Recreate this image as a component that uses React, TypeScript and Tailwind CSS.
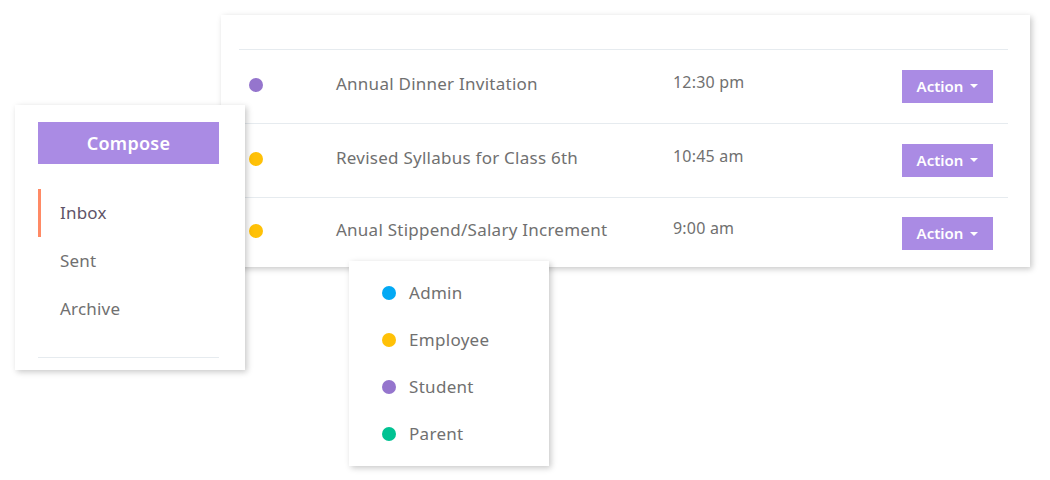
import React from "react";

const rows = [
  { dot: "bg-[#9575cd]", title: "Annual Dinner Invitation", time: "12:30 pm" },
  { dot: "bg-[#ffc107]", title: "Revised Syllabus for Class 6th", time: "10:45 am" },
  { dot: "bg-[#ffc107]", title: "Anual Stippend/Salary Increment", time: "9:00 am" },
];

const legend = [
  { dot: "bg-[#03a9f4]", label: "Admin" },
  { dot: "bg-[#ffc107]", label: "Employee" },
  { dot: "bg-[#9575cd]", label: "Student" },
  { dot: "bg-[#00c292]", label: "Parent" },
];

export default function App() {
  return (
    <div
      className="relative w-[1050px] h-[480px] bg-white overflow-hidden text-[#707070]"
      style={{ fontFamily: '"Noto Sans", "Open Sans", sans-serif' }}
    >
      {/* Main message card */}
      <div className="absolute left-[221px] top-[15px] w-[809px] h-[252px] bg-white shadow-[2px_2px_6px_rgba(0,0,0,0.22)] pl-[18px] pr-[22px]">
        <div className="h-[35px] border-b border-[#e6ebef]" />
        {rows.map((r, i) => (
          <div
            key={i}
            className={`flex items-center ${i < 2 ? "h-[74px] border-b border-[#e6ebef]" : "h-[69px]"}`}
          >
            <div className="w-[97px] pl-[10px] flex items-center">
              <span className={`block w-[14px] h-[14px] rounded-full ${r.dot} -mt-[4px]`} />
            </div>
            <div className="w-[337px] text-[17px] tracking-[0.25px] -mt-[5px]">{r.title}</div>
            <div className="w-[229px] text-[16px] tracking-[0.2px] -mt-[10px]">{r.time}</div>
            <button className={`w-[91px] h-[33px] bg-[#aa8be4] text-white text-[15px] font-semibold flex items-center justify-center gap-[7px] ${i === 2 ? "mt-[2px]" : "-mt-[1px]"}`}>
              Action
              <span className="block w-0 h-0 border-l-[4px] border-r-[4px] border-t-[4px] border-l-transparent border-r-transparent border-t-white" />
            </button>
          </div>
        ))}
      </div>

      {/* Left nav card */}
      <div className="absolute left-[15px] top-[105px] w-[230px] h-[265px] bg-white shadow-[2px_2px_6px_rgba(0,0,0,0.22)] pl-[23px] pr-[26px] pt-[17px]">
        <button className="w-full h-[42px] bg-[#aa8be4] text-white text-[18px] tracking-[0.3px] font-semibold">
          Compose
        </button>
        <div className="mt-[25px]">
          <div className="h-[48px] flex items-center border-l-[3px] border-[#ff8a65] pl-[19px] text-[17px] tracking-[0.2px] text-[#5f5468]">
            Inbox
          </div>
          <div className="h-[48px] flex items-center pl-[22px] text-[17px] tracking-[0.2px]">Sent</div>
          <div className="h-[48px] flex items-center pl-[22px] text-[17px] tracking-[0.2px]">Archive</div>
        </div>
        <div className="mt-[24px] border-b border-[#e6ebef]" />
      </div>

      {/* Legend card */}
      <div className="absolute left-[349px] top-[261px] w-[200px] h-[205px] bg-white shadow-[2px_2px_6px_rgba(0,0,0,0.22)] pl-[33px] pt-[8px]">
        {legend.map((l, i) => (
          <div key={i} className="h-[47px] flex items-center gap-[13px] text-[17px] tracking-[0.3px]">
            <span className={`block w-[14px] h-[14px] rounded-full ${l.dot}`} />
            {l.label}
          </div>
        ))}
      </div>
    </div>
  );
}
